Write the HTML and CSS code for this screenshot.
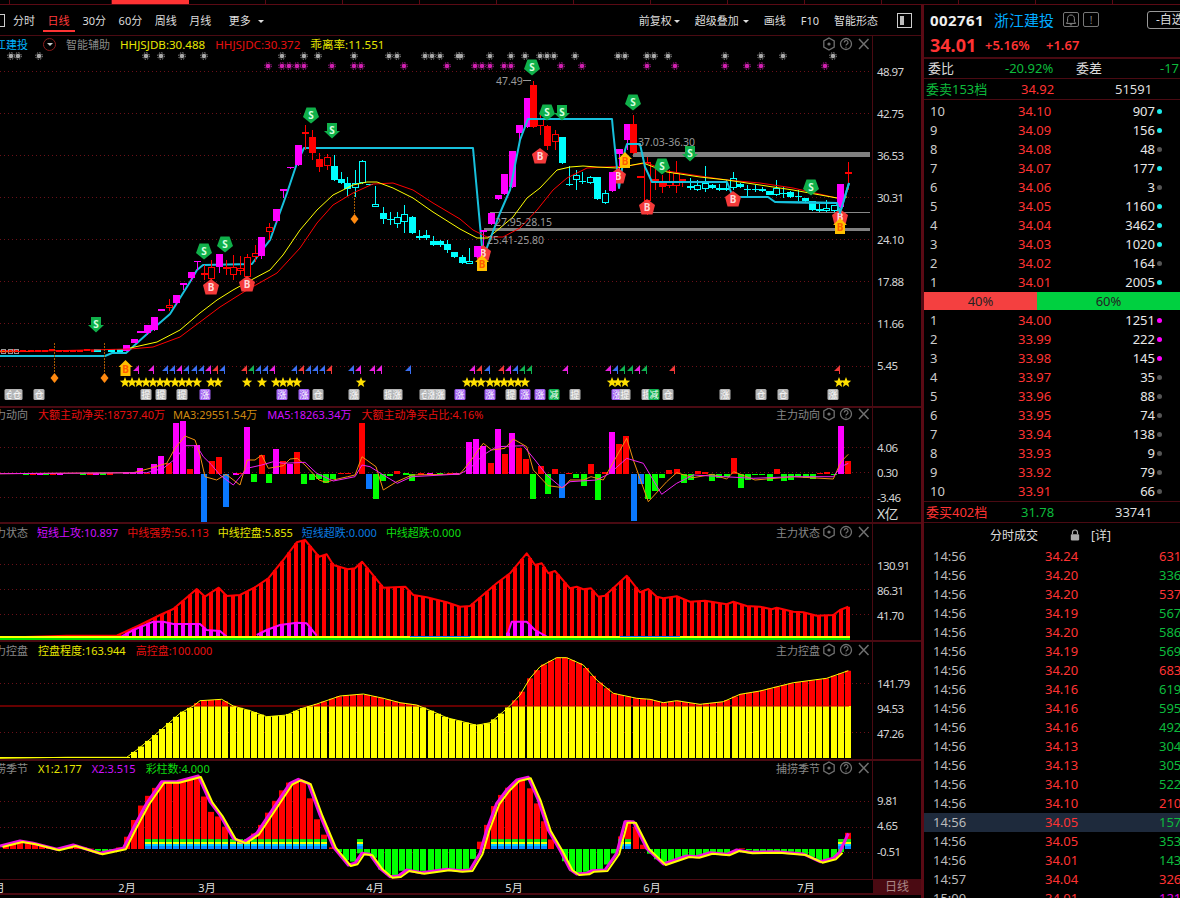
FILE: index.html
```html
<!DOCTYPE html>
<html lang="zh-CN">
<head>
<meta charset="utf-8">
<title>浙江建投 002761</title>
<link rel="stylesheet" href="styles.css">
</head>
<body>
<div class="strip"><span class="strip-on"></span></div>
<div class="app">
  <main class="main">
    <nav class="toolbar">
      <span class="tb-box"></span>
      <a>分时</a><a class="on">日线</a><a>30分</a><a>60分</a><a>周线</a><a>月线</a><a class="more">更多<i class="caret"></i></a>
      <span class="spacer"></span>
      <a class="rt">前复权<i class="caret tight"></i></a><a class="rt">超级叠加<i class="caret mid"></i></a><a class="rt">画线</a><a class="rt">F10</a><a class="rt">智能形态</a>
      <span class="tb-box2"><b></b></span>
    </nav>

    <section class="pane p1">
      <div class="plot">
        <svg id="s1" class="chart"></svg>
        <div class="legend"><span class="cy title">江建投</span><span class="round"><i class="caret"></i></span><span class="gy cn">智能辅助</span><span class="ye">HHJSJDB:30.488</span><span class="re">HHJSJDC:30.372</span><span class="ye">乖离率:11.551</span></div>
        <div class="tools"><svg viewBox="0 0 51 14" class="tool-icons"><use href="#tool"/></svg></div>
      </div>
      <div class="axis"><span style="top:29px">48.97</span><span style="top:71px">42.75</span><span style="top:113px">36.53</span><span style="top:155px">30.31</span><span style="top:197px">24.10</span><span style="top:239px">17.88</span><span style="top:281px">11.66</span><span style="top:323px">5.45</span></div>
    </section>

    <section class="pane p2">
      <div class="plot">
        <svg id="s2" class="chart"></svg>
        <div class="legend"><span class="gy title3">力动向</span><span class="re tight-r">大额主动净买:18737.40万</span><span class="or">MA3:29551.54万</span><span class="mg">MA5:18263.34万</span><span class="re">大额主动净买占比:4.16%</span></div>
        <div class="tools"><em>主力动向</em><svg viewBox="0 0 51 14" class="tool-icons"><use href="#tool"/></svg></div>
      </div>
      <div class="axis"><span style="top:33px">4.06</span><span style="top:58px">0.30</span><span style="top:83px">-3.46</span><span class="xy" style="top:99px">X亿</span></div>
    </section>

    <section class="pane p3">
      <div class="plot">
        <svg id="s3" class="chart"></svg>
        <div class="legend"><span class="gy title3">力状态</span><span class="mg">短线上攻:10.897</span><span class="re">中线强势:56.113</span><span class="ye">中线控盘:5.855</span><span class="bl">短线超跌:0.000</span><span class="gr">中线超跌:0.000</span></div>
        <div class="tools"><em>主力状态</em><svg viewBox="0 0 51 14" class="tool-icons"><use href="#tool"/></svg></div>
      </div>
      <div class="axis"><span style="top:35px">130.91</span><span style="top:60px">86.31</span><span style="top:85px">41.70</span></div>
    </section>

    <section class="pane p4">
      <div class="plot">
        <svg id="s4" class="chart"></svg>
        <div class="legend"><span class="gy title3">力控盘</span><span class="ye">控盘程度:163.944</span><span class="re">高控盘:100.000</span></div>
        <div class="tools"><em>主力控盘</em><svg viewBox="0 0 51 14" class="tool-icons"><use href="#tool"/></svg></div>
      </div>
      <div class="axis"><span style="top:35px">141.79</span><span style="top:60px">94.53</span><span style="top:85px">47.26</span></div>
    </section>

    <section class="pane p5">
      <div class="plot">
        <svg id="s5" class="chart"></svg>
        <div class="legend"><span class="gy title3">捞季节</span><span class="ye">X1:2.177</span><span class="mg">X2:3.515</span><span class="gr">彩柱数:4.000</span></div>
        <div class="tools"><em>捕捞季节</em><svg viewBox="0 0 51 14" class="tool-icons"><use href="#tool"/></svg></div>
      </div>
      <div class="axis"><span style="top:33px">9.81</span><span style="top:58px">4.65</span><span style="top:84px">-0.51</span></div>
    </section>

    <footer class="months">
      <div class="month-row"><span style="left:-4px">1月</span><span style="left:127px">2月</span><span style="left:207px">3月</span><span style="left:375px">4月</span><span style="left:514px">5月</span><span style="left:652px">6月</span><span style="left:806px">7月</span></div>
      <div class="period">日线</div>
    </footer>
  </main>

  <aside class="side">
    <div class="quote-top">
      <b class="code">002761</b><span class="name">浙江建投</span>
      <span class="sq"><svg viewBox="0 0 14 14" width="14" height="14"><path d="M7 2c-2.400 0-3.400 1.800-3.400 3.600v3L2.400 10.400h9.200L10.400 8.600v-3C10.400 3.800 9.400 2 7 2zM5.800 11.800h2.400" fill="none" stroke="#888" stroke-width="1"/></svg></span>
      <span class="sq2">!</span>
      <span class="fav">-自选</span>
    </div>
    <div class="quote-price"><b class="big">34.01</b><b class="pct">+5.16%</b><b class="chg">+1.67</b></div>
    <div class="stat"><span class="wt">委比</span><span class="gr2 r1">-20.92%</span><span class="wt l2">委差</span><span class="gr2 r2">-17</span></div>
    <div class="tot"><span class="gr2">委卖153档</span><span class="rd">34.92</span><span class="wt v">51591</span></div>
    <div class="book" id="asks"></div>
    <div class="ratio"><span class="ratio-r">40%</span><span class="ratio-g">60%</span></div>
    <div class="book" id="bids"></div>
    <div class="tot tot2"><span class="rd">委买402档</span><span class="gr2">31.78</span><span class="wt v">33741</span></div>
    <div class="ticks-head"><span>分时成交</span><svg viewBox="0 0 12 14" width="10" height="12"><path d="M3 6V4a3 3 0 0 1 6 0v2" fill="none" stroke="#aaa" stroke-width="1.400"/><rect x="1" y="6" width="10" height="7.500" rx="1" fill="#aaa"/></svg><span class="detail">[详]</span></div>
    <div class="ticks" id="ticks"></div>
  </aside>
</div>

<svg class="defs" width="0" height="0" aria-hidden="true">
  <symbol id="tool" viewBox="0 0 51 14">
    <path d="M7 1l5.200 3v6L7 13l-5.200-3V4z" fill="none" stroke="#707070" stroke-width="1.300"/><circle cx="7" cy="7" r="1.600" fill="#707070"/>
    <circle cx="24" cy="7" r="5.500" fill="none" stroke="#707070" stroke-width="1.300"/><path d="M22.200 5.400a1.900 1.900 0 1 1 2.800 1.700c-.7.400-1 .8-1 1.500M24 9.800v1" fill="none" stroke="#707070" stroke-width="1.200"/>
    <path d="M37 2l9.500 10M46.500 2L37 12" fill="none" stroke="#707070" stroke-width="1.500"/>
  </symbol>
</svg>
<script src="chart.js"></script>
</body>
</html>
```

FILE: styles.css
```css
* { box-sizing: border-box; }
html, body { margin: 0; padding: 0; height: 100%; overflow: hidden; background: #000; }
body { width: 1180px; height: 898px; font-family: "Noto Sans", "Noto Sans CJK SC", sans-serif; font-size: 11px; color: #ccc; }
.defs { position: absolute; }
.strip {
  height: 5px; border-bottom: 1px solid #5a0a14;
  background: repeating-linear-gradient(90deg, #000 0, #000 76px, #5a0a14 76px, #5a0a14 77px);
  background-position: 35px 0;
}
.strip-on { display: block; width: 77px; height: 4px; margin-left: 112px; background: #f33; }
.app { display: flex; height: 893px; }
.main { width: 921px; display: flex; flex-direction: column; flex: none; }

.toolbar { height: 31px; display: flex; align-items: center; padding-left: 13px; border-bottom: 1px solid #4a0a12; color: #ddd; font-size: 11px; position: relative; white-space: nowrap; }
.toolbar a { margin-right: 12.500px; height: 24px; line-height: 25px; flex: none; }
.toolbar a.on { color: #ff3b3b; border-bottom: 2px solid #f33; padding: 0 5px; margin: 0 8px 0 -5px; }
.toolbar .more { margin-left: 5px; }
.toolbar a.rt { margin-right: 15px; }
.toolbar .tb-box { position: absolute; left: -6px; top: 9px; width: 11px; height: 13px; border: 1px solid #ccc; }
.spacer { flex: 1; }
.tb-box2 { width: 15px; height: 15px; border: 1px solid #ccc; margin: 1px 9px 0 4px; padding: 2px; display: block; flex: none; }
.tb-box2 b { display: block; width: 4px; height: 100%; background: #bbb; }
.caret { display: inline-block; width: 0; height: 0; border: 3px solid transparent; border-top: 3px solid #ddd; border-bottom: 0; margin-left: 7px; vertical-align: 2px; }
.caret.tight { margin-left: 2px; }
.caret.mid { margin-left: 4px; }

.pane { position: relative; display: flex; border-bottom: 2px solid #4a0a12; flex: none; }
.p1 { height: 372px; }
.p2 { height: 116px; }
.p3 { height: 118px; }
.p4 { height: 119px; }
.p5 { height: 119px; border-bottom: 1px solid #4a0a12; }
.plot { position: relative; width: 873px; height: 100%; border-right: 1px solid #4a0a12; overflow: hidden; }
.chart { position: absolute; left: 0; top: 0; width: 872px; height: 100%; display: block; }
.chart .mk { font-size: 10px; font-weight: 700; text-anchor: middle; }
.chart .tag { font-size: 9px; fill: #fff; text-anchor: middle; }
.chart .lbl { font-size: 10.500px; fill: #9a9a9a; }
.axis { position: relative; flex: 1; }
.axis span { position: absolute; left: 4px; font-size: 11.500px; letter-spacing: -.6px; line-height: 14px; color: #d4d4d4; white-space: nowrap; }
.axis .xy { font-size: 14px; }

.legend { position: absolute; left: 0; top: 0; height: 16px; display: flex; align-items: center; gap: 10px; white-space: nowrap; font-size: 11px; }
.p1 .legend { font-size: 11.600px; }
.p1 .cn { font-size: 11px; }
.p2 .legend { top: -2px; }
.p3 .legend { gap: 9px; }
.p5 .legend { top: -1px; }
.tight-r { margin-right: -2px; }
.title { margin-left: -5px; width: 33px; font-size: 11px; flex: none; }
.title3 { margin-left: -5px; width: 33px; flex: none; }
.round { width: 13px; height: 13px; border: 1px solid #8a1a1a; border-radius: 50%; display: flex; align-items: center; justify-content: center; margin-left: 5px; flex: none; }
.round .caret { margin: 0; border-top-color: #ccc; }
.tools { position: absolute; right: -1px; top: 0; height: 16px; display: flex; align-items: center; gap: 2px; color: #888; }
.p2 .tools { top: -2px; }
.p5 .tools { top: -1px; }
.tools em { font-style: normal; }
.tool-icons { width: 51px; height: 14px; display: block; }
.cy { color: #00b4ff; } .gy { color: #888; } .ye { color: #e6e600; } .re { color: #e61010; }
.or { color: #d08a10; } .mg { color: #d010ff; } .bl { color: #0a7ce0; } .gr { color: #0fdc0f; }

.months { position: relative; height: 15px; display: flex; flex: none; border-bottom: 2px solid #4a0a12; }
.month-row { position: relative; width: 873px; font-size: 11px; color: #ddd; overflow: hidden; }
.month-row span { position: absolute; top: -1px; transform: translateX(-50%); white-space: nowrap; }
.period { flex: 1; background: #4a0a12; color: #a88; text-align: center; font-size: 12px; line-height: 14px; }

.side { flex: 1; min-width: 0; border-left: 3px solid #5a0a14; overflow: hidden; font-size: 13px; color: #ddd; display: flex; flex-direction: column; }
.quote-top { height: 29px; display: flex; align-items: center; padding-left: 6px; flex: none; white-space: nowrap; }
.code { font-size: 15px; color: #eee; letter-spacing: .4px; width: 64px; flex: none; }
.name { font-size: 15px; color: #00aaff; width: 69px; flex: none; }
.sq, .sq2 { width: 16px; height: 15px; border: 1px solid #777; border-radius: 2px; display: flex; align-items: center; justify-content: center; color: #888; font-size: 10px; margin-right: 4px; flex: none; }
.fav { margin-left: 44px; width: 60px; height: 18px; border: 1px solid #999; border-radius: 3px; padding-left: 8px; line-height: 15px; font-size: 12px; flex: none; }
.quote-price { display: flex; align-items: center; padding-left: 6px; flex: none; color: #f33; border-bottom: 2px solid #4a0a12; height: 25px; padding-bottom: 2px; }
.big { font-size: 18px; width: 55px; }
.pct { font-size: 13px; width: 61px; font-weight: 600; }
.chg { font-size: 13px; font-weight: 600; }
.stat { height: 20px; position: relative; flex: none; border-bottom: 1px solid #4a0a12; line-height: 19px; white-space: nowrap; }
.stat span { position: absolute; top: 0; }
.stat span:first-child { left: 4px; }
.r1 { left: 81px; } .l2 { left: 152px; } .r2 { left: 236px; }
.wt { color: #ddd; } .gr2 { color: #0dbb3c; } .rd { color: #f33; }
.tot { height: 21px; flex: none; display: grid; grid-template-columns: 95px 65px 1fr; align-items: center; padding-left: 2px; border-bottom: 1px solid #4a0a12; white-space: nowrap; line-height: 20px; }
.tot .v { padding-left: 29px; }
.tot2 { border-top: 1px solid #4a0a12; height: 22px; }
.book { flex: none; padding-top: 1px; }
#asks { padding-top: 2px; margin-bottom: -1px; }
.book-row { height: 19px; display: grid; grid-template-columns: 6px 88px 56px 81px 8px 1fr; align-items: center; line-height: 19px; }
.book-row .lb { grid-column: 2; color: #ccc; }
.book-row .pr { grid-column: 3; color: #f33; }
.book-row .vl { grid-column: 4; text-align: right; color: #e8e8e8; }
.book-row .dot { grid-column: 5; width: 5px; height: 5px; border-radius: 50%; margin-left: 2px; }
.c { background: #1de9e9; } .g { background: #555; } .m { background: #f0f; }
.ratio { height: 18px; display: flex; flex: none; margin-top: 1px; color: #222; font-size: 13px; line-height: 18px; text-align: center; }
.ratio-r { width: 113px; background: #f44040; }
.ratio-g { flex: 1; background: #00d040; }
.ticks-head { height: 24px; flex: none; display: flex; align-items: center; font-size: 12px; padding-left: 66px; white-space: nowrap; }
.ticks-head svg { margin-left: 32px; }
.detail { margin-left: 11px; }
.ticks { flex: 1; overflow: hidden; }
.tick { height: 19px; display: grid; grid-template-columns: 9px 112px 70px 1fr; line-height: 19px; white-space: nowrap; }
.tick .t { grid-column: 2; color: #bbb; }
.tick .p { color: #f33; }
.tick .v { padding-left: 44px; }
.tick.hl { background: #1e2a3c; }
.vr { color: #f33; } .vg { color: #0dbb3c; } .vm { color: #e000e0; }
```

FILE: chart.js
```js
(function () {
  function z(ox, oy, arr) { return arr.map(function (p) { return [ox + p[0] / 3, oy + p[1] / 3]; }); }
  function pl(pts, col, w) {
    return '<polyline fill="none" stroke="' + col + '" stroke-width="' + (w || 1) + '" stroke-linejoin="round" points="' +
      pts.map(function (p) { return p[0].toFixed(1) + ',' + p[1].toFixed(1); }).join(' ') + '"/>';
  }
  function rect(x, y, w, h, c) { return '<rect x="' + x + '" y="' + y + '" width="' + w + '" height="' + h + '" fill="' + c + '"/>'; }
  function dotted(y) { return '<line x1="0" x2="873" y1="' + (y + .5) + '" y2="' + (y + .5) + '" stroke="#6a1018" stroke-dasharray="1 3"/>'; }
  function interp(env, x) {
    if (x < env[0][0] || x > env[env.length - 1][0]) return null;
    for (var i = 1; i < env.length; i++) if (x <= env[i][0]) {
      var a = env[i - 1], b = env[i];
      return a[1] + (b[1] - a[1]) * (x - a[0]) / ((b[0] - a[0]) || 1);
    }
    return null;
  }
  function xi(i) { return Math.round(-0.75 + 7.07 * i); }
  function setSvg(id, top, h, body) {
    var s = document.getElementById(id);
    s.setAttribute('viewBox', '0 ' + top + ' 872 ' + h);
    s.setAttribute('preserveAspectRatio', 'none');
    s.innerHTML = body;
  }

  /* ---------- pane 1 ---------- */
  var out = '', i, x, y;
  [71, 113, 155, 197, 239, 281, 323, 366].forEach(function (v) { out += dotted(v); });

  out += rect(633, 152, 237, 5, '#808080') + rect(490, 212, 380, 1, '#888') + rect(484, 228, 386, 3, '#808080');

  function dotStar(px, py, c) {
    return '<circle cx="' + px + '" cy="' + py + '" r="2.300" fill="' + c + '"/>' +
      '<circle cx="' + px + '" cy="' + py + '" r="3.300" fill="none" stroke="' + c + '" stroke-width="1" stroke-dasharray="1.300 1.290"/>';
  }
  [11, 18, 39, 146, 161, 182, 204, 282, 304, 318, 354, 389, 397, 425, 432, 440, 458, 461, 490, 511, 525, 540, 547, 554, 575, 618, 625, 647, 654, 668, 725, 761, 783, 833]
    .forEach(function (px) { out += dotStar(px, 56, '#a8a8a8'); });
  [268, 282, 289, 297, 304, 332, 354, 361, 404, 447, 475, 482, 490, 504, 511, 561, 582, 647, 675, 725, 747, 761, 825]
    .forEach(function (px) { out += dotStar(px, 66, '#d020b0'); });

  for (i = 0; i < 14; i++) out += rect(xi(i), 350 + (i % 5 === 2 ? -1 : 0), 6, 2, '#f00');
  out += rect(0, 351, 30, 1, '#ff0') + rect(94, 349, 7, 3, '#0ff') + rect(108, 349, 7, 3, '#0ff') + rect(117, 349, 6, 3, '#0ff');
  [1, 8, 14].forEach(function (px) {
    out += '<rect x="' + (px + .5) + '" y="349.500" width="4" height="4" fill="none" stroke="#999"/>';
  });

  var cyan = [[0,356],[105,356],[112,353],[126,353],[147,334],[170,314],[190,282],[197,270],[203,265],[252,264],[257,257],[270,240],[287,193],[297,163],[304,148],[473,148],[483,258],[500,213],[510,190],[520,140],[528,119],[612,119],[613,130],[619,188],[625,150],[627,144],[640,144],[645,167],[652,182],[727,182],[733,197],[768,197],[775,202],[837,203],[840,213],[849,183]];
  out += pl(cyan.slice(0, 17), '#17c0dc', 2);

  // x, bodyTop, bodyBottom, wickTop, wickBottom, type
  var C = [
    [126,345,351,345,351,'m'],[133.5,339,343,339,343,'m'],[140,331,333,331,333,'m'],[147,325,333,325,335,'m'],[154,317,330,317,331,'m'],
    [161,309,311,309,311,'m'],[169,305,308,299,311,'R'],[176,295,303,295,305,'m'],[183,283,285,283,290,'m'],[190.5,272,278,272,281,'m'],
    [197,261,262,261,270,'m'],[204,273,275,265,280,'r'],[211,267,279,260,285,'R'],[218.7,254,267,254,273,'m'],[226,267,269,260,275,'r'],
    [233,267,275,255,280,'R'],[240,268,271,256,275,'R'],[247,257,277,254,279,'R'],[254.6,253,257,245,262,'R'],[261,237,256,237,259,'m'],
    [269,227,232,223,240,'R'],[276,209,221,209,223,'m'],[283,189,191,189,198,'m'],[290,167,168,167,169,'m'],[297.6,145,165,145,166,'m'],
    [304.5,132,134,125,150,'r'],[312,137,153,130,160,'r'],[319,159,167,153,172,'r'],[326.5,157,166,154,170,'R'],
    [333.5,166,180,155,181,'c'],[340.5,179,183,172,184,'c'],[347,183,189,177,196,'c'],[354.6,183,188,170,197,'C'],[362,161,183,160,184,'C'],
    [369,184,185,184,186,'c'],[375,204,207,186,207,'C'],[383,213,219,207,224,'c'],[390,219,220,212,225,'c'],[397,217,224,212,228,'C'],
    [404,214,222,205,233,'C'],[412,217,233,216,234,'c'],[419,236,238,230,240,'c'],[426,235,238,230,240,'c'],[433,241,245,236,246,'c'],
    [440,241,245,240,247,'c'],[447,244,250,240,253,'c'],[454,252,257,252,258,'c'],[462,257,263,255,264,'c'],[468.7,261,264,248,264,'C'],
    [477,246,257,246,258,'m'],[483,230,232,230,255,'m'],[490.7,213,224,213,225,'m'],[497.7,195,199,195,200,'m'],[504.4,174,194,174,195,'m'],
    [512,151,187,151,188,'m'],[519,125,133,125,145,'m'],[526.7,98,127,98,128,'m'],[533,85,127,81,128,'r'],[540,118,126,114,135,'R'],
    [547,126,146,125,150,'r'],[555,134,142,130,150,'R'],[562,137,163,137,164,'c'],[568.6,184,185,166,186,'c'],[576,175,180,170,190,'C'],
    [582,181,182,172,184,'c'],[590,177,183,176,184,'C'],[597,177,199,177,200,'c'],[605,193,203,190,204,'C'],[612,172,191,172,192,'m'],
    [619.3,149,154,149,187,'m'],[626.7,124,140,124,150,'m'],[633.3,124,153,115,154,'r'],[640,176,178,176,178,'r'],[647,162,201,157,215,'R'],
    [655,179,181,165,190,'r'],[662,181,187,175,193,'r'],[669,181,186,170,188,'R'],[676,173,186,161,193,'R'],[682,179,181,179,187,'r'],
    [690,186,188,178,190,'c'],[697,185,190,180,191,'C'],[705,183,189,166,192,'C'],[712,185,188,184,189,'c'],[719,188,190,184,191,'c'],
    [726,188,190,180,191,'c'],[733,178,188,172,190,'C'],[740,184,187,183,188,'c'],[747,189,190,185,197,'c'],[755,189,190,185,192,'c'],
    [762,189,191,187,192,'c'],[769,191,195,191,195,'c'],[776,188,195,180,196,'C'],[783,193,194,187,198,'c'],[790,192,197,191,198,'c'],
    [798,196,197,190,201,'c'],[805,198,201,198,202,'c'],[812,201,210,201,211,'c'],[819,209,211,204,212,'c'],[826,208,211,200,212,'C'],
    [833.5,205,211,205,212,'C'],[840.3,184,207,184,208,'m'],[847.5,172,174,162,190,'R']
  ];
  var colors = { m: '#f0f', r: '#f00', R: '#f00', c: '#0ff', C: '#0ff' };
  function candles(list) {
    var s = '';
    list.forEach(function (d) {
      var px = Math.round(d[0]), col = colors[d[5]];
      s += rect(px, d[3], 1, d[4] - d[3], col);
      if (d[5] === 'R' || d[5] === 'C') {
        s += '<rect x="' + (px - 2.5) + '" y="' + (d[1] + .5) + '" width="6" height="' + Math.max(d[2] - d[1] - 1, 1) + '" fill="#000" stroke="' + col + '"/>';
      } else {
        s += rect(px - 3, d[1], 7, Math.max(d[2] - d[1], 1), col);
      }
    });
    return s;
  }
  out += candles(C);

  var yellow = [[130,348],[157,342],[180,330],[200,313],[217,300],[233,290],[253,279],[270,270],[283,255],[300,230],[317,210],[333,195],[353,185],[367,182],[377,182],[393,188],[413,198],[433,212],[460,229],[477,238],[488,238],[500,228],[513,217],[527,198],[540,188],[557,170],[570,167],[583,166],[597,167],[617,168],[643,163],[667,172],[700,177],[727,180],[760,185],[793,190],[837,198],[847,197]];
  var red = [[0,352],[130,349],[153,347],[180,337],[200,322],[220,307],[247,290],[277,273],[300,248],[317,223],[333,205],[353,193],[373,184],[393,183],[413,190],[433,203],[460,219],[473,230],[487,237],[503,237],[520,228],[537,210],[553,190],[567,178],[587,168],[607,167],[627,166],[647,163],[667,171],[693,175],[727,180],[760,183],[793,188],[837,198]];
  out += pl(red, '#f00') + pl(yellow, '#ff0');
  out += pl(cyan.slice(16), '#17c0dc', 2);

  function poly(px, py, pts, col) {
    return '<polygon points="' + pts.map(function (p) { return (px + p[0]) + ',' + (py + p[1]); }).join(' ') + '" fill="' + col + '"/>';
  }
  function label(px, py, t, col) { return '<text x="' + px + '" y="' + py + '" class="mk" fill="' + col + '">' + t + '</text>'; }
  function pentaDown(px, py) { return poly(px, py, [[-4.5,-7.5],[4.5,-7.5],[8,2],[0,8.5],[-8,2]], '#10b04a') + label(px, py + 3.5, 'S', '#d8ffe0'); }
  function arrowDown(px, py) { return poly(px, py, [[-5,-8],[5,-8],[5,0],[8,0],[0,7.5],[-8,0],[-5,0]], '#10b04a') + label(px, py + 2.5, 'S', '#d8ffe0'); }
  function pentaUp(px, py) { return poly(px, py, [[0,-8],[8,-2],[5.5,7.5],[-5.5,7.5],[-8,-2]], '#f43a3a') + label(px, py + 4, 'B', '#ffd8d8'); }
  function arrowUp(px, py) { return poly(px, py, [[0,-8],[7,-1],[5,-1],[5,8],[-5,8],[-5,-1],[-7,-1]], '#ffc000') + label(px, py + 5, 'B', '#ff5a00'); }
  [[311,115],[204,251],[225,244],[532,67],[547,112],[633,102],[662,166],[811,187]].forEach(function (p) { out += pentaDown(p[0], p[1]); });
  [[332,131],[96,325],[562,113],[690,154]].forEach(function (p) { out += arrowDown(p[0], p[1]); });
  [[211,287],[247,284],[540,156],[647,207],[733,199],[840,217],[483,253],[618,176]].forEach(function (p) { out += pentaUp(p[0], p[1]); });
  out += candles(C.filter(function (d) { return d[0] === 477 || d[0] === 612 || d[0] === 840.3; }));
  [[125.5,368],[482,263],[625,160],[840,226]].forEach(function (p) { out += arrowUp(p[0], p[1]); });
  out += pl(cyan.slice(-4), '#17c0dc', 2);

  [[54,343],[104,343],[354,192]].forEach(function (p) {
    var px = p[0], y0 = p[1], y1 = y0 === 192 ? 214 : 373;
    out += '<line x1="' + (px + .5) + '" x2="' + (px + .5) + '" y1="' + y0 + '" y2="' + y1 + '" stroke="#a85a00" stroke-dasharray="2 1"/>';
    out += poly(px + .5, y1, [[0,0],[4,5],[0,10],[-4,5]], '#ff8a10');
  });

  var FC = { m: '#e820e0', b: '#3a6ef0', r: '#f03838', g: '#10b050' };
  ('136m 151m 165b 172b 179m 186b 194b 201b 208m 215r 222b 244r 251g 258b 265b 272m 294b 301r 308b 315b 322b 329r 351b 358m 372m 379m 408b 472m 479r 487b 501r 508m 515b 522g 529g 565m 608m 615b 622g 630g 637m 644g 672r 837r')
    .split(' ').forEach(function (f) {
      var px = parseInt(f, 10);
      out += poly(px, 0, [[3,365],[-3,371],[2,371],[2,374],[3,374]], FC[f.slice(-1)]);
    });

  function star(px, py, r) {
    var s = [];
    for (var k = 0; k < 10; k++) {
      var a = -Math.PI / 2 + k * Math.PI / 5, q = k % 2 ? r * .42 : r;
      s.push((px + q * Math.cos(a)).toFixed(1) + ',' + (py + q * Math.sin(a)).toFixed(1));
    }
    return '<polygon points="' + s.join(' ') + '" fill="#ffe000"/>';
  }
  [125,132,139,146,153,160,167,175,182,189,197,211,218,247,262,276,283,290,297,361,467,474,481,490,497,504,511,518,525,612,618,625,839,846]
    .forEach(function (px) { out += star(px, 382.5, 5.5); });

  var TC = { g: '#b4b4b4', p: '#a060f0', e: '#10b050' };
  [[10,'g','仓'],[17,'g','仓'],[39,'g','仓'],[146,'g','提'],[161,'g','提'],[182,'g','提'],[205,'p','涨'],[282,'p','涨'],[304,'p','涨'],[318,'g','仓'],[354,'g','涨'],[389,'g','提'],[397,'g','涨'],[425,'g','仓'],[432,'g','涨'],[440,'g','涨'],[460,'p','涨'],[490,'p','涨'],[511,'g','提'],[525,'p','涨'],[540,'p','涨'],[554,'e','减'],[575,'g','提'],[617,'p','涨'],[625,'g','提'],[647,'g','提'],[654,'e','减'],[668,'g','仓'],[725,'g','涨'],[761,'g','仓'],[783,'g','仓'],[833,'g','涨']]
    .forEach(function (t) {
      out += '<rect x="' + (t[0] - 5.5) + '" y="389" width="11" height="11" rx="1.500" fill="' + TC[t[1]] + '"/><text x="' + t[0] + '" y="398" class="tag">' + t[2] + '</text>';
    });

  out += '<text x="496" y="85" class="lbl">47.49</text><line x1="523" x2="531" y1="80.500" y2="80.500" stroke="#999"/>';
  out += '<text x="638" y="146" class="lbl">37.03-36.30</text><text x="495" y="226" class="lbl">27.95-28.15</text><text x="487" y="244" class="lbl">25.41-25.80</text>';
  setSvg('s1', 36, 370, out);

  /* ---------- pane 2 ---------- */
  out = '';
  [447, 472, 497].forEach(function (v) { out += dotted(v); });
  function barsZ(ox, list) {
    var s = '', C2 = { m: '#f0f', r: '#f00', g: '#0f0', b: '#0a78ff' };
    list.forEach(function (b) {
      var px = Math.round(ox + b[0] / 3) - 3, h = b[1];
      s += h > 0 ? rect(px, 474 - h, 6, h, C2[b[2]]) : rect(px, 474, 6, -h, C2[b[2]]);
    });
    return s;
  }
  [70,90,110,130,150,170,240,260,280,300,320,700,1210,1255,1280,1310,1340,1360].forEach(function (v, k) {
    out += rect(Math.round(v / 3), 473, 6, 2, ['#0f0', '#f00', '#f0f'][k % 3]);
  });
  out += barsZ(0, [[378,2,'m'],[399,2,'m'],[420,6,'m'],[441,1,'r'],[462,10,'m'],[484,18,'m'],[506,11,'r'],[528,51,'m'],[549,53,'m'],[570,5,'r'],[591,29,'m'],[613,-48,'b'],[635,13,'r'],[656,17,'r'],[678,-33,'b'],[720,1,'r'],[741,47,'m'],[763,-8,'g'],[785,19,'r'],[807,-9,'g'],[828,25,'m'],[849,13,'r'],[870,10,'m'],[892,22,'r'],[913,-10,'g'],[935,-6,'g'],[957,-5,'g'],[978,-9,'g'],[1000,-5,'g'],[1022,1,'r'],[1043,1,'r'],[1086,51,'r'],[1107,-15,'b'],[1128,-25,'g'],[1149,-7,'g'],[1170,-2,'g'],[1192,3,'r'],[1236,-7,'g']]);
  out += barsZ(460, [[27,32,'m'],[48,35,'m'],[70,28,'m'],[92,11,'r'],[114,45,'m'],[135,20,'r'],[156,41,'m'],[177,26,'r'],[199,15,'r'],[220,-25,'g'],[242,8,'r'],[264,-20,'g'],[285,5,'r'],[306,-24,'b'],[327,1,'r'],[349,-4,'g'],[372,-12,'g'],[393,10,'r'],[414,-26,'g'],[435,2,'r'],[456,42,'m'],[478,30,'r'],[499,38,'r'],[521,-47,'b'],[543,-10,'b'],[564,-25,'g'],[585,-17,'g'],[607,-4,'g'],[628,4,'r'],[650,5,'r'],[672,-9,'g'],[693,-6,'g'],[714,3,'r'],[735,2,'r'],[757,-7,'g'],[778,-4,'g'],[800,-3,'g'],[821,16,'r'],[843,-14,'g'],[864,-6,'g'],[885,-1,'g'],[907,-1,'g'],[929,-7,'g'],[951,5,'r'],[972,-7,'g'],[993,-6,'g'],[1015,-3,'g'],[1037,-4,'g'],[1058,-5,'g'],[1080,1,'r'],[1100,2,'r'],[1122,-1,'g'],[1143,48,'m'],[1165,13,'r']]);
  var oa = z(0, 405, [[0,206],[400,203],[450,190],[500,175],[525,130],[555,93],[585,105],[600,150],[615,215],[650,225],[678,208],[720,240],[742,165],[765,165],[785,150],[805,190],[850,182],[870,162],[892,160],[915,180],[957,225],[978,232],[1000,225],[1043,215],[1065,210],[1086,155],[1128,185],[1150,255],[1190,230],[1236,210],[1380,207]])
    .concat(z(460, 405, [[30,170],[70,115],[95,135],[135,130],[160,102],[200,125],[220,195],[264,242],[310,248],[330,225],[370,225],[393,215],[430,225],[500,100],[520,165],[565,290],[620,230],[650,203],[700,218],[757,208],[800,222],[821,200],[885,225],[1000,215],[1120,222],[1143,170],[1165,148]]));
  var ma = z(0, 405, [[0,206],[440,203],[490,190],[528,160],[555,122],[590,122],[610,155],[635,180],[660,210],[700,240],[741,190],[785,180],[820,170],[850,175],[915,172],[950,205],[1000,228],[1065,215],[1086,180],[1110,185],[1150,210],[1192,235],[1236,215],[1380,207]])
    .concat(z(460, 405, [[30,190],[70,150],[110,125],[190,122],[225,165],[260,210],[305,248],[330,230],[410,225],[450,205],[500,160],[550,175],[605,268],[650,235],[700,210],[880,220],[1000,215],[1120,215],[1143,185],[1165,175]]));
  out += pl(oa, '#f09010') + pl(ma, '#f020f0');
  setSvg('s2', 408, 114, out);

  /* ---------- pane 3 ---------- */
  out = '';
  [564, 589, 614].forEach(function (v) { out += dotted(v); });
  var e3 = z(0, 405, [[0,698],[200,692],[350,692],[420,660],[480,630],[520,612],[590,552],[615,575],[656,548],[680,573],[720,570],[763,548],[805,520],[850,465],[890,412],[915,405],[957,455],[980,448],[1000,480],[1043,493],[1065,490],[1086,470],[1150,548],[1216,545],[1240,570],[1280,577],[1340,592],[1380,605]])
    .concat(z(460, 405, [[30,603],[110,535],[150,505],[200,445],[225,480],[245,475],[265,505],[285,498],[330,550],[350,545],[370,553],[393,550],[415,575],[435,572],[500,512],[540,562],[565,552],[590,575],[610,580],[650,574],[690,590],[735,587],[800,598],[820,590],[860,603],[900,605],[935,613],[950,608],[1000,620],[1030,622],[1070,632],[1120,630],[1140,615],[1165,605]]));
  var m3 = z(0, 405, [[360,697],[400,675],[460,650],[490,650],[520,657],[600,657],[620,675],[660,678],[680,695]]);
  var m3b = z(0, 405, [[770,690],[800,675],[840,660],[890,653],[920,655],[950,692]]);
  var m3c = z(460, 405, [[140,695],[155,650],[200,650],[225,675],[260,695]]);
  for (i = 0; i <= 120; i++) {
    x = xi(i); y = interp(e3, x);
    if (y !== null && y < 636) out += rect(x - 2, y, 4, 638 - y, '#f00');
  }
  out += pl(e3, '#f00', 2);
  [m3, m3b, m3c].forEach(function (m) {
    for (var k = 0; k <= 120; k++) {
      var x2 = xi(k), y2 = interp(m, x2);
      if (y2 !== null) out += rect(x2 - 2, y2, 4, 638 - y2, '#f0f');
    }
    out += pl(m, '#f0f', 2);
  });
  out += rect(0, 636, 850, 2, '#ff0') + rect(0, 638, 850, 2, '#00e000');
  out += rect(410, 636, 60, 1, '#0a78ff') + rect(620, 636, 60, 1, '#0a78ff');
  setSvg('s3', 524, 116, out);

  /* ---------- pane 4 ---------- */
  out = '';
  [683, 732].forEach(function (v) { out += dotted(v); });
  var e4 = z(0, 640, [[0,355],[200,352],[380,352],[410,330],[450,298],[500,255],[540,220],[580,198],[600,182],[665,178],[700,198],[750,212],[800,230],[860,225],[900,207],[950,192],[1020,168],[1090,162],[1150,175],[1200,188],[1250,195],[1300,215],[1340,233],[1380,243]])
    .concat(z(460, 640, [[50,256],[90,248],[130,215],[150,197],[180,165],[210,115],[240,80],[290,53],[320,53],[370,75],[410,120],[460,160],[530,175],[570,178],[610,188],[650,182],[720,193],[790,185],[840,163],[900,153],[1000,128],[1100,115],[1165,92]]));
  for (i = 0; i <= 120; i++) {
    x = xi(i); y = interp(e4, x);
    if (y === null) continue;
    if (y < 706) { out += rect(x - 3, y, 6, 706 - y, '#f00') + rect(x - 3, 706, 6, 52, '#ff0'); }
    else if (y < 757) out += rect(x - 3, y, 6, 758 - y, '#ff0');
  }
  out += rect(0, 757, 130, 1, '#ff0');
  out += rect(0, 705.5, 849, 1, '#c00');
  out += pl(e4, '#ff0');
  setSvg('s4', 642, 117, out);

  /* ---------- pane 5 ---------- */
  out = '';
  [801, 827, 852].forEach(function (v) { out += dotted(v); });
  var e5 = z(0, 640, [[0,622],[60,605],[100,612],[180,627],[200,615],[240,620],[280,627],[300,635],[340,632],[370,615],[390,570],[412,515],[433,480],[455,455],[477,430],[500,425],[540,425],[590,410],[610,465],[632,515],[655,530],[675,560],[700,600],[720,605],[745,600],[780,560],[800,525],[820,490],[840,460],[860,430],[890,420],[910,425],[932,480],[955,550],[975,590],[990,620],[1010,627],[1035,660],[1060,665],[1080,640],[1100,640],[1120,650],[1150,700],[1180,708],[1210,690],[1250,693],[1380,690]])
    .concat(z(460, 640, [[20,690],[40,655],[60,605],[85,545],[105,490],[130,455],[150,438],[175,420],[195,415],[215,455],[240,510],[262,572],[285,627],[300,627],[325,688],[350,700],[372,698],[390,690],[430,690],[450,660],[470,627],[480,598],[500,540],[522,543],[543,603],[556,627],[565,637],[600,665],[630,670],[670,650],[710,650],[760,640],[800,645],[830,625],[850,625],[880,635],[1000,635],[1040,643],[1080,663],[1120,655],[1140,640],[1150,627],[1165,575]]));
  var stackR = [[144,330],[358,362],[488,544],[618,628],[838,849]];
  for (i = 0; i <= 120; i++) {
    x = xi(i); y = interp(e5, x);
    if (y === null) continue;
    if (y < 849) out += rect(x - 3, y, 6, 849 - y, '#f00');
    else if (y > 850) out += rect(x - 3, 849, 6, y - 849, '#0f0');
    var on = stackR.some(function (r) { return x >= r[0] && x <= r[1]; });
    if (on) {
      out += rect(x - 3, 839, 6, 3, '#10e010') + rect(x - 3, 842, 6, 2, '#ff0') + rect(x - 3, 844, 6, 2, '#00d0ff') + rect(x - 3, 846, 6, 3, '#0a88ff');
    }
  }
  var x2L = z(0, 640, [[0,618],[60,603],[100,610],[170,628],[220,615],[300,640],[370,625],[400,565],[440,490],[485,425],[530,425],[595,408],[630,485],[660,525],[700,595],[730,607],[770,580],[830,490],[870,430],[895,418],[925,430],[960,525],[1000,620],[1045,675],[1065,670],[1085,640],[1110,643],[1140,685],[1170,710],[1195,708],[1220,690],[1265,698],[1340,688],[1380,692]])
    .concat(z(460, 640, [[30,690],[60,640],[80,570],[110,490],[140,450],[170,420],[205,412],[235,480],[265,570],[300,630],[330,688],[350,702],[380,700],[395,692],[435,690],[470,640],[495,545],[520,545],[560,625],[610,672],[680,648],[710,650],[750,638],[800,643],[830,630],[870,637],[950,635],[1030,642],[1080,665],[1120,655],[1140,635],[1165,580]]));
  var x1L = x2L.map(function (p) { return [p[0] + 2.5, p[1] + 1]; }).filter(function (p) { return p[0] < 849; });
  out += pl(x2L, '#f010e0', 3) + pl(x1L, '#ff0', 2);
  setSvg('s5', 761, 118, out);

  /* ---------- order book ---------- */
  function bookRows(id, rows) {
    document.getElementById(id).innerHTML = rows.map(function (r) {
      return '<div class="book-row"><span class="lb">' + r[0] + '</span><span class="pr">' + r[1] + '</span><span class="vl">' + r[2] + '</span><i class="dot ' + r[3] + '"></i></div>';
    }).join('');
  }
  bookRows('asks', [[10,'34.10',907,'c'],[9,'34.09',156,'c'],[8,'34.08',48,'g'],[7,'34.07',177,'c'],[6,'34.06',3,'g'],[5,'34.05',1160,'c'],[4,'34.04',3462,'c'],[3,'34.03',1020,'c'],[2,'34.02',164,'g'],[1,'34.01',2005,'c']]);
  bookRows('bids', [[1,'34.00',1251,'m'],[2,'33.99',222,'m'],[3,'33.98',145,'m'],[4,'33.97',35,'g'],[5,'33.96',88,'g'],[6,'33.95',74,'g'],[7,'33.94',138,'g'],[8,'33.93',9,'g'],[9,'33.92',79,'g'],[10,'33.91',66,'g']]);

  var T = [['14:56','34.24',631,'r'],['14:56','34.20',336,'g'],['14:56','34.20',537,'r'],['14:56','34.19',567,'g'],['14:56','34.20',586,'g'],['14:56','34.19',569,'g'],['14:56','34.20',683,'r'],['14:56','34.16',619,'g'],['14:56','34.16',595,'g'],['14:56','34.16',492,'g'],['14:56','34.13',304,'g'],['14:56','34.13',305,'g'],['14:56','34.10',522,'g'],['14:56','34.10',210,'r'],['14:56','34.05',157,'g',1],['14:56','34.05',353,'g'],['14:56','34.01',143,'g'],['14:57','34.04',326,'r'],['15:00','34.01',12171,'m']];
  document.getElementById('ticks').innerHTML = T.map(function (r) {
    return '<div class="tick' + (r[4] ? ' hl' : '') + '"><span class="t">' + r[0] + '</span><span class="p">' + r[1] + '</span><span class="v v' + r[3] + '">' + r[2] + '</span></div>';
  }).join('');
})();
```
